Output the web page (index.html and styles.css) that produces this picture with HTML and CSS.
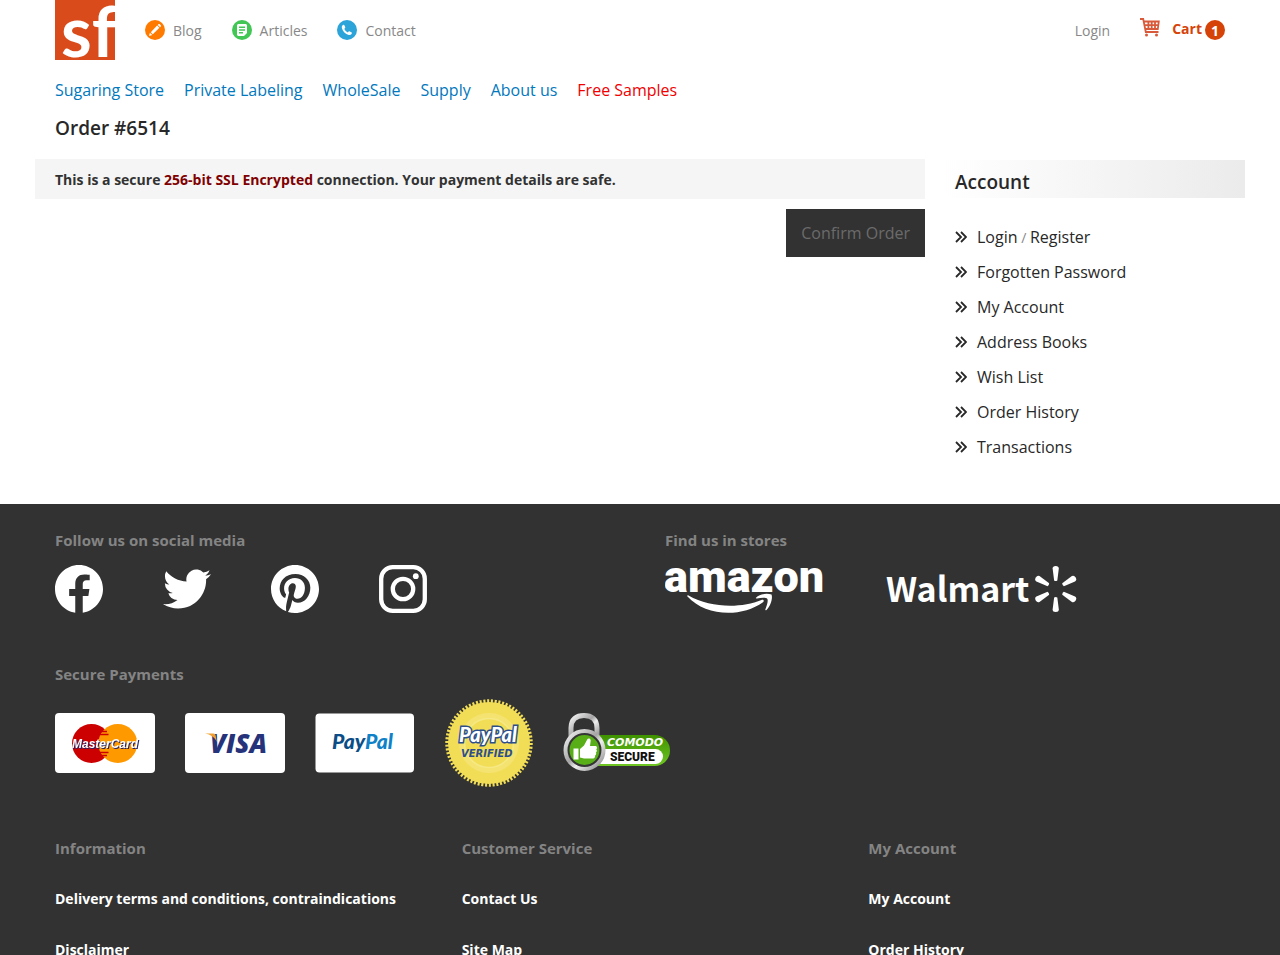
FILE: index.html
```html
<!DOCTYPE html>
<html lang="en">
<head>
<meta charset="utf-8">
<meta name="viewport" content="width=device-width, initial-scale=1">
<title>Order #6514</title>
<link rel="stylesheet" href="styles.css">
</head>
<body>
<svg class="defs" aria-hidden="true">
  <symbol id="angles" viewBox="0 0 12 12"><path d="M1 1l5 5-5 5M6 1l5 5-5 5" fill="none" stroke="#282828" stroke-width="1.8"/></symbol>
</svg>
<header class="container topbar">
  <a class="logo" href="#" aria-label="Home">
    <svg width="60" height="60" viewBox="0 0 60 60"><rect width="60" height="60" fill="#d94b1a"/><text class="logo-text" x="6" y="57">sf</text></svg>
  </a>
  <nav class="quick" aria-label="Quick links">
    <a href="#"><svg width="20" height="20" viewBox="0 0 20 20"><circle cx="10" cy="10" r="10" fill="#ff7b00"/><path d="M4 16l.9-3.200 2.300 2.300zM5.800 12.200l6.300-6.700 2.300 2.300-6.600 6.400zM12.800 4.900l.6-.6c.5-.5 1-.5 1.400 0l.9.9c.5.500.5 1 0 1.400l-.6.600z" fill="#fff"/></svg>Blog</a>
    <a href="#"><svg width="20" height="20" viewBox="0 0 20 20"><circle cx="10" cy="10" r="10" fill="#42c654"/><path d="M6 4h8l1 1v8l-3 3H6l-1-1V5z" fill="#fff"/><path d="M7 7.2h6M7 10h6M7 12.8h4" stroke="#42c654" stroke-width="1.5"/></svg>Articles</a>
    <a href="#"><svg width="20" height="20" viewBox="0 0 20 20"><circle cx="10" cy="10" r="10" fill="#2ca3d9"/><path d="M6 5c.6-.4 1.200-.2 1.500.4l.7 1.600c.2.500 0 .9-.3 1.200l-.6.500c.7 1.700 1.900 3 3.600 3.700l.7-.8c.3-.3.700-.4 1.100-.2l1.700.9c.5.300.6.700.4 1.200-.6 1.200-1.700 1.700-3 1.400-3.500-.8-6-3.400-6.900-6.900C4.600 6.800 5 5.700 6 5z" fill="#fff"/></svg>Contact</a>
  </nav>
  <a class="login" href="#">Login</a>
  <a class="cart" href="#">
    <svg width="20" height="20" viewBox="0 0 20 20" fill="none" stroke="#d95a3a" stroke-width="1.800"><path d="M0 2h3.200l2.600 13h12.700M3.900 4.500h14.900l-1 7.500H5.300M4.500 8.200h13.500M8.400 4.500v7M11.700 4.500v7M15 4.500v7"/><circle cx="6.500" cy="18" r="1.500" fill="#d95a3a" stroke="none"/><circle cx="16.500" cy="18" r="1.500" fill="#d95a3a" stroke="none"/></svg>
    <span class="cart-label">Cart</span><span class="badge">1</span>
  </a>
</header>
<nav class="container menu" aria-label="Main">
  <a href="#">Sugaring Store</a><a href="#">Private Labeling</a><a href="#">WholeSale</a><a href="#">Supply</a><a href="#">About us</a><a class="hot" href="#">Free Samples</a>
</nav>
<h1 class="container title">Order #6514</h1>
<div class="columns">
  <main class="order">
    <p class="notice">This is a secure <span>256-bit SSL Encrypted</span> connection. Your payment details are safe.</p>
    <button class="confirm" type="button">Confirm Order</button>
  </main>
  <aside class="account">
    <h2>Account</h2>
    <ul>
      <li><svg width="12" height="12"><use href="#angles"/></svg><span><a href="#">Login</a> / <a href="#">Register</a></span></li>
      <li><svg width="12" height="12"><use href="#angles"/></svg><a href="#">Forgotten Password</a></li>
      <li><svg width="12" height="12"><use href="#angles"/></svg><a href="#">My Account</a></li>
      <li><svg width="12" height="12"><use href="#angles"/></svg><a href="#">Address Books</a></li>
      <li><svg width="12" height="12"><use href="#angles"/></svg><a href="#">Wish List</a></li>
      <li><svg width="12" height="12"><use href="#angles"/></svg><a href="#">Order History</a></li>
      <li><svg width="12" height="12"><use href="#angles"/></svg><a href="#">Transactions</a></li>
    </ul>
  </aside>
</div>
<footer class="footer">
  <div class="container">
    <div class="halves">
      <section>
        <h3>Follow us on social media</h3>
        <div class="brands">
          <a href="#" aria-label="Facebook"><svg width="48" height="48" viewBox="0 0 24 24" fill="#fff"><path d="M24 12c0-6.627-5.373-12-12-12S0 5.373 0 12c0 5.990 4.388 10.954 10.125 11.854v-8.385H7.078V12h3.047V9.357c0-3.007 1.792-4.669 4.533-4.669 1.312 0 2.686.235 2.686.235v2.700H15.830c-1.491 0-1.956.925-1.956 1.874V12h3.328l-.532 3.469h-2.796v8.385C19.612 22.954 24 17.990 24 12z"/></svg></a>
          <a href="#" aria-label="Twitter"><svg width="48" height="48" viewBox="0 0 24 24" fill="#fff"><path d="M23.954 4.569a10 10 0 0 1-2.825.775 4.958 4.958 0 0 0 2.163-2.723c-.951.555-2.005.959-3.127 1.184a4.920 4.920 0 0 0-8.384 4.482C7.691 8.094 4.066 6.130 1.640 3.161a4.822 4.822 0 0 0-.666 2.475c0 1.710.870 3.213 2.188 4.096a4.904 4.904 0 0 1-2.228-.616v.061a4.923 4.923 0 0 0 3.946 4.827 4.996 4.996 0 0 1-2.212.085 4.937 4.937 0 0 0 4.604 3.417 9.868 9.868 0 0 1-6.102 2.105c-.390 0-.779-.023-1.170-.067a13.995 13.995 0 0 0 7.557 2.209c9.054 0 13.999-7.496 13.999-13.986 0-.209 0-.420-.015-.630a9.936 9.936 0 0 0 2.460-2.548l-.047-.020z"/></svg></a>
          <a href="#" aria-label="Pinterest"><svg width="48" height="48" viewBox="0 0 24 24" fill="#fff"><path d="M12 0C5.373 0 0 5.372 0 12c0 5.084 3.163 9.426 7.627 11.174-.105-.949-.200-2.405.042-3.441.218-.937 1.407-5.965 1.407-5.965s-.359-.719-.359-1.782c0-1.668.967-2.914 2.171-2.914 1.023 0 1.518.769 1.518 1.690 0 1.029-.655 2.568-.994 3.995-.283 1.194.599 2.169 1.777 2.169 2.133 0 3.772-2.249 3.772-5.495 0-2.873-2.064-4.882-5.012-4.882-3.414 0-5.418 2.561-5.418 5.207 0 1.031.397 2.138.893 2.738a.360.360 0 0 1 .083.345l-.333 1.360c-.053.220-.174.267-.402.161-1.499-.698-2.436-2.889-2.436-4.649 0-3.785 2.750-7.262 7.929-7.262 4.163 0 7.398 2.967 7.398 6.931 0 4.136-2.607 7.464-6.227 7.464-1.216 0-2.359-.631-2.750-1.378l-.748 2.853c-.271 1.043-1.002 2.350-1.492 3.146C9.570 23.812 10.763 24 12 24c6.627 0 12-5.373 12-12 0-6.628-5.373-12-12-12z"/></svg></a>
          <a href="#" aria-label="Instagram"><svg width="48" height="48" viewBox="0 0 48 48" fill="none" stroke="#fff" stroke-width="4.300"><rect x="2.200" y="2.200" width="43.600" height="43.600" rx="11.500"/><circle cx="24" cy="24" r="10.200"/><circle cx="36.800" cy="11.200" r="2.900" fill="#fff" stroke="none"/></svg></a>
        </div>
      </section>
      <section>
        <h3>Find us in stores</h3>
        <div class="brands">
          <a href="#" aria-label="Amazon"><svg width="160" height="48" viewBox="0 0 160 48" fill="#fff"><text class="amazon" x="-1" y="27">amazon</text><path d="M22.500 31.500c-.8-.6 0-1.500 1-1C45 43 76 43.500 96.500 35c1.800-.8 3.200 1 1.500 2.200C76 53 40 51 22.500 31.500z"/><path d="M91 32.800c4-4 11-4.700 15.500-3.200 1.500 3.500-1 11.500-5 15.300-.8.600-1.500.3-1.100-.7 1.200-3 3-7.800 2-10.300-1.400-1.700-6.500-1.100-10.400-.5-1.100.2-1.500-.3-1-.6z"/></svg></a>
          <a href="#" aria-label="Walmart"><svg width="192" height="48" viewBox="0 0 192 48" fill="#fff"><text class="walmart" x="1" y="37">Walmart</text><g transform="translate(170.700 24)"><path id="ray" d="M-1.600-8.500L-3.100-20.500Q-3.100-23 0-23T3.100-20.500L1.600-8.500Q0-7.500-1.600-8.500z"/><use href="#ray" transform="rotate(60)"/><use href="#ray" transform="rotate(120)"/><use href="#ray" transform="rotate(180)"/><use href="#ray" transform="rotate(240)"/><use href="#ray" transform="rotate(300)"/></g></svg></a>
        </div>
      </section>
    </div>
    <section class="payments">
      <h3>Secure Payments</h3>
      <div class="badges">
        <svg width="100" height="60" viewBox="0 0 100 60" role="img" aria-label="MasterCard"><rect width="100" height="60" rx="4" fill="#fff"/><circle cx="36.500" cy="30.500" r="19.500" fill="#c00"/><circle cx="62.800" cy="30.500" r="19.500" fill="#f90"/><path d="M46 18.500h6M44.500 21.500h9M44.500 39.500h9M46 42.500h6" stroke="#c00" stroke-width="1.500"/><text class="mc" x="17" y="35">MasterCard</text></svg>
        <svg width="100" height="60" viewBox="0 0 100 60" role="img" aria-label="Visa"><rect width="100" height="60" rx="4" fill="#fff"/><text class="visa" x="25" y="39.500">VISA</text><path d="M20 20.500h8.200c1.600 0 2.200.8 2.500 2.200l1.200 6.300c-2.200-4.600-6-7.500-11.900-8.500z" fill="#f0a030"/></svg>
        <svg width="100" height="60" viewBox="0 0 100 60" role="img" aria-label="PayPal"><rect x=".5" y=".5" width="98.500" height="59" rx="4" fill="#fff"/><text class="paypal" x="17" y="36"><tspan fill="#0b4d87">Pay</tspan><tspan fill="#0f81c7">Pal</tspan></text></svg>
        <svg width="88" height="88" viewBox="0 0 88 88" role="img" aria-label="PayPal Verified"><circle cx="44" cy="44" r="41.500" fill="none" stroke="#f2dd57" stroke-width="4.500" pathLength="140" stroke-dasharray="1.100 .9"/><circle cx="44" cy="44" r="41" fill="#f2dd57"/><circle cx="44" cy="44" r="30" fill="#f4e370"/><circle cx="44" cy="44" r="24.500" fill="#f2dd57" stroke="#f6e985" stroke-width="1.500"/><text class="seal" x="14" y="43">PayPal</text><text class="verified" x="16" y="58">VERIFIED</text></svg>
        <svg width="108" height="62" viewBox="0 0 108 62" role="img" aria-label="Comodo Secure">
          <defs><linearGradient id="steel" x1="0" y1="0" x2="1" y2="1"><stop offset="0" stop-color="#f6f6f6"/><stop offset=".45" stop-color="#a5a3a3"/><stop offset=".6" stop-color="#eee"/><stop offset="1" stop-color="#858383"/></linearGradient><linearGradient id="green" x1="0" y1="0" x2="0" y2="1"><stop offset="0" stop-color="#3f9200"/><stop offset="1" stop-color="#6fc622"/></linearGradient></defs>
          <path d="M8 26V16C8 7 13.500 3.500 21 3.500S34 7 34 16v12" fill="none" stroke="url(#steel)" stroke-width="5"/>
          <rect x="20" y="23" width="87" height="31" rx="15.500" fill="url(#green)"/><rect x="22" y="37" width="78" height="15" rx="7.500" fill="#fff"/>
          <text class="comodo" x="44" y="34">COMODO</text><text class="secure" x="47" y="49">SECURE</text>
          <circle cx="21.500" cy="38" r="19" fill="#353535" stroke="url(#steel)" stroke-width="4"/><circle cx="21.500" cy="38" r="15" fill="#57ae16"/><path d="M10.500 36.500h5v11h-5zM17 37l4-3.500 3.500-6.500c.5-1 3.200-1 3.200 1.500l-.7 5.500h5.500c1.500 0 2 2.500.7 3.300 1 1 .8 2.500-.2 3.200.5 1 .1 2.400-.9 3 .3 1.500-.5 3-2 3H21l-4-1z" fill="#fff"/>
        </svg>
      </div>
    </section>
    <div class="thirds">
      <section><h3>Information</h3><ul><li><a href="#">Delivery terms and conditions, contraindications</a></li><li><a href="#">Disclaimer</a></li></ul></section>
      <section><h3>Customer Service</h3><ul><li><a href="#">Contact Us</a></li><li><a href="#">Site Map</a></li></ul></section>
      <section><h3>My Account</h3><ul><li><a href="#">My Account</a></li><li><a href="#">Order History</a></li></ul></section>
    </div>
  </div>
</footer>
</body>
</html>
```
FILE: styles.css
```css
* { box-sizing: border-box; }
body { margin: 0; font: 14px/20px "Open Sans", sans-serif; color: #888; background: #fff; }
a { color: inherit; text-decoration: none; }
h1, h2, h3, p, ul { margin: 0; padding: 0; }
ul { list-style: none; }
svg { display: block; flex: none; }
.defs { position: absolute; width: 0; height: 0; }
.container { max-width: 1280px; margin: 0 auto; padding: 0 55px; }

.topbar { display: flex; height: 60px; align-items: center; }
.logo-text { font: 700 70px Lato, sans-serif; fill: #fff; }
.quick { display: flex; gap: 30px; margin-left: 30px; }
.quick a { display: flex; align-items: center; gap: 8px; padding-top: 2px; }
.quick svg { margin-bottom: 2px; }
.login { margin-left: auto; padding-top: 2px; }
.cart { display: flex; align-items: center; margin-left: 30px; color: #d64309; font-weight: 700; }
.cart svg { margin-bottom: 6px; }
.cart-label { margin: 0 3px 2px 12px; }
.badge { width: 20px; height: 20px; border-radius: 50%; background: #d64309; color: #fff; line-height: 22px; text-align: center; }

.menu { display: flex; flex-wrap: wrap; gap: 0 20px; padding-top: 20px; font-size: 16px; color: #0278bd; }
.menu .hot { color: #f00000; }
.title { padding-top: 16px; font-size: 19px; line-height: 24px; font-weight: 600; color: #282828; }

.columns { display: flex; gap: 20px; max-width: 1280px; margin: 0 auto; padding: 19px 35px 39px; }
.order { flex: 1; display: flex; flex-direction: column; gap: 10px; }
.notice { padding: 11px 20px 9px; background: #f5f5f5; color: #323232; font-weight: 700; }
.notice span { color: #800000; }
.confirm { align-self: flex-end; padding: 12px 15px; border: 0; background: #323232; color: #6b6b6b; font: 16px/24px "Open Sans", sans-serif; }
.account { flex: 0 0 300px; padding-top: 1px; }
.account h2 { padding: 10px 10px 4px; background: linear-gradient(90deg, #fff, #ebebeb); color: #282828; font-size: 19px; line-height: 24px; font-weight: 600; }
.account ul { padding: 22px 10px 0; }
.account li { display: flex; align-items: center; gap: 10px; line-height: 35px; }
.account li svg { margin-bottom: 2px; }
.account li a { font-size: 16px; color: #282828; }

.footer { padding: 26px 0 30px; background: #323232; }
.footer h3 { font-size: 15px; line-height: 20px; font-weight: 700; color: #848484; }
.halves { display: grid; grid-template-columns: 1fr 1fr; gap: 50px; }
.brands { display: flex; gap: 60px; padding-top: 15px; }
.payments { padding-top: 51px; }
.badges { display: flex; align-items: center; gap: 30px; padding-top: 15px; }
.thirds { display: grid; grid-template-columns: repeat(3, 1fr); gap: 50px; padding-top: 51px; }
.thirds ul { padding-top: 15px; color: #fff; font-weight: 700; }
.thirds li { line-height: 51px; }

.amazon { font: 900 45px Roboto, sans-serif; }
.walmart { font: 700 34px "Noto Sans CJK SC", sans-serif; }
.mc { font: italic 700 12px "Liberation Sans", sans-serif; fill: #fff; filter: drop-shadow(1px 1px 0 #25256b); }
.visa { font: italic 800 26px "Open Sans", sans-serif; fill: #26337a; }
.paypal { font: italic 900 21px Lato, sans-serif; }
.seal { font: italic 900 20px Lato, sans-serif; fill: #fff; stroke: #2c4f8c; stroke-width: 3px; paint-order: stroke; }
.verified { font: italic 700 10px "DejaVu Sans", sans-serif; fill: #2c4f8c; }
.comodo { font: italic 700 11px "DejaVu Sans", sans-serif; fill: #fff; }
.secure { font: 900 12px Roboto, sans-serif; fill: #111; }
```
